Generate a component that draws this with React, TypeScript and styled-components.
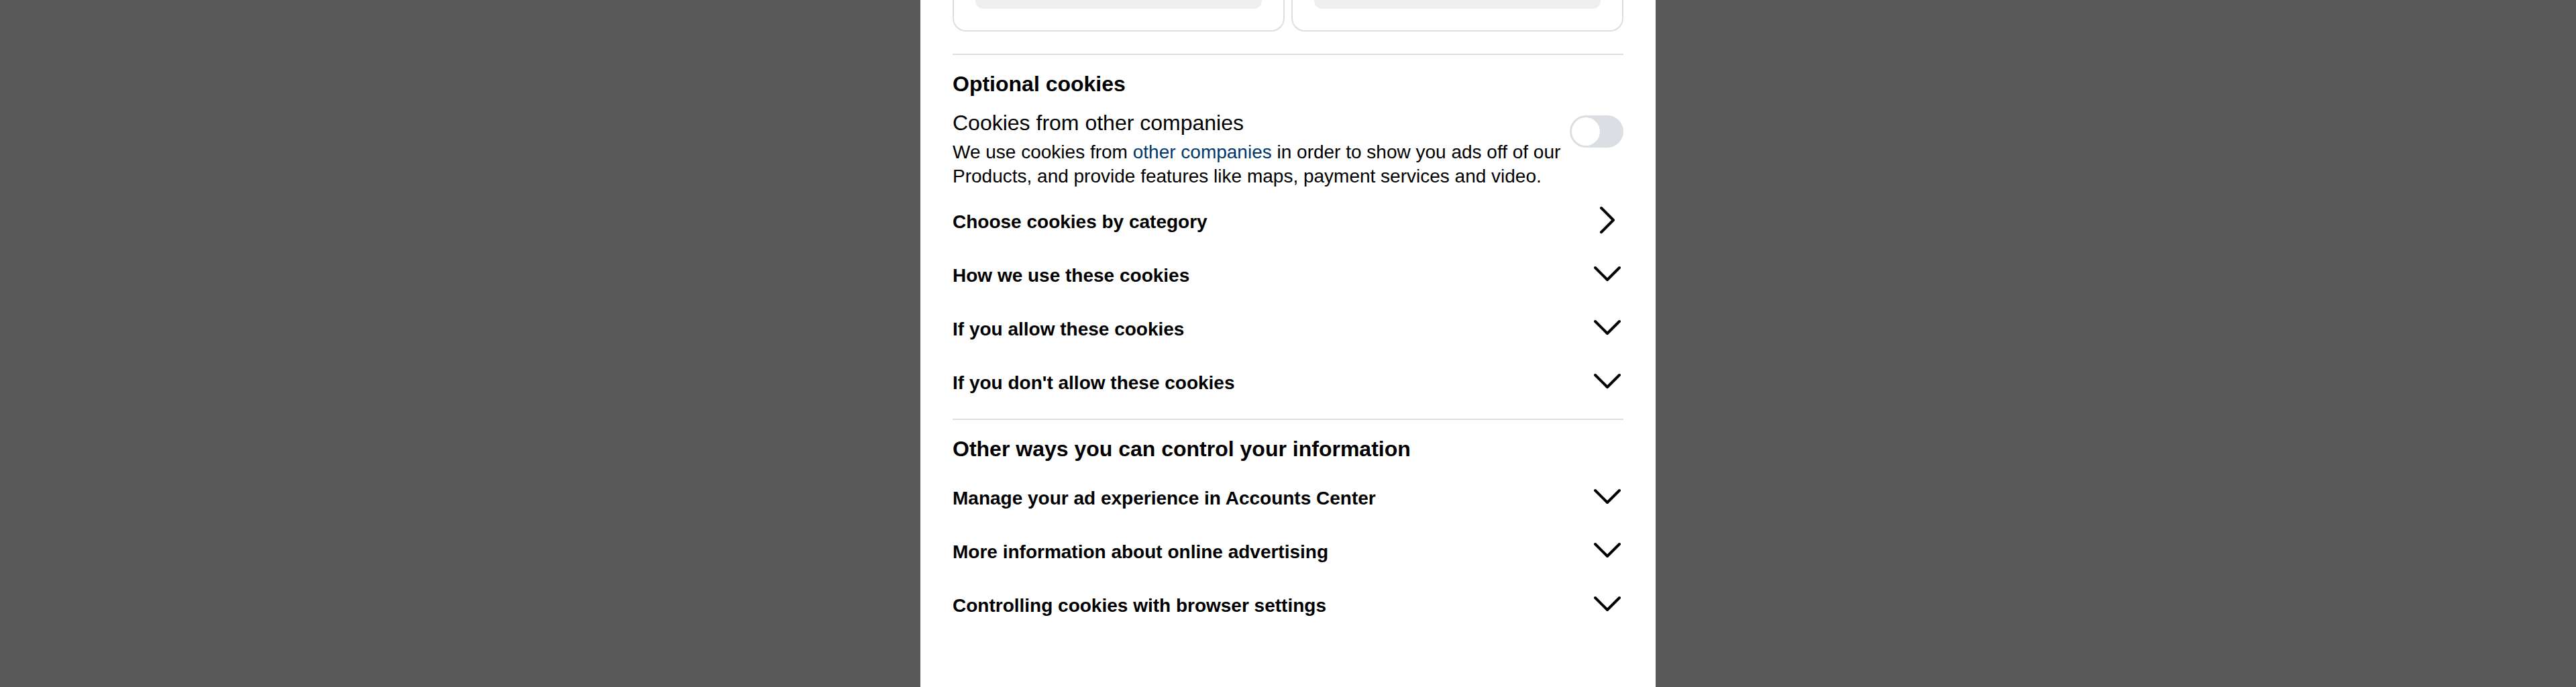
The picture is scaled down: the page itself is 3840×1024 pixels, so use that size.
import { useLayoutEffect, useRef } from "react";
import styled, { createGlobalStyle } from "styled-components";

const GlobalStyle = createGlobalStyle`
  html, body {
    margin: 0;
    padding: 0;
    background: #595959;
    overflow: hidden;
  }
  * {
    box-sizing: border-box;
  }
`;

const Backdrop = styled.div`
  height: 100vh;
  display: flex;
  justify-content: center;
  background: #595959;
  font-family: "Liberation Sans", Arial, sans-serif;
  color: #000;
`;

// The dialog is a scroll container; it is shown scrolled down to the optional cookies part.
const Dialog = styled.div`
  position: relative;
  width: 1096px;
  height: 100%;
  background: #fff;
  padding: 0 48px 160px;
  overflow-y: auto;
  scrollbar-width: none;
  &::-webkit-scrollbar {
    display: none;
  }
`;

const Intro = styled.div`
  padding-top: 48px;
  display: flex;
  flex-direction: column;
  gap: 24px;
`;

const DialogTitle = styled.h1`
  margin: 0;
  font-size: 40px;
  line-height: 48px;
  font-weight: 700;
`;

const Paragraph = styled.p`
  margin: 0;
  font-size: 28px;
  line-height: 36px;
`;

const CardGrid = styled.div`
  display: grid;
  grid-template-columns: 1fr 1fr;
  gap: 10px;
  margin-top: 32px;
  margin-bottom: 33px;
`;

const Card = styled.div`
  display: flex;
  flex-direction: column;
  gap: 16px;
  border: 2px solid #dedede;
  border-radius: 20px;
  padding: 32px;
`;

const CardTitle = styled.h3`
  margin: 0;
  font-size: 28px;
  line-height: 36px;
  font-weight: 700;
`;

const CardButton = styled.button`
  margin-top: auto;
  height: 56px;
  border: none;
  border-radius: 12px;
  background: #efefef;
  font-family: inherit;
  font-size: 28px;
  font-weight: 700;
  color: #000;
`;

const Divider = styled.hr`
  margin: 0;
  border: none;
  height: 2px;
  background: #dedede;
`;

const Section = styled.section`
  padding: 23px 0 13px;
`;

const SectionTitle = styled.h2`
  margin: 0;
  font-size: 32px;
  line-height: 40px;
  font-weight: 700;
`;

const ToggleBlock = styled.div`
  display: flex;
  align-items: flex-start;
  gap: 4px;
  margin-top: 18px;
`;

const ToggleText = styled.div`
  flex: 1;
`;

const ToggleLabel = styled.div`
  font-size: 32px;
  line-height: 40px;
`;

const Description = styled.p`
  margin: 6px 0 0;
  font-size: 28px;
  line-height: 36px;
`;

const Link = styled.a`
  color: #00376b;
  text-decoration: none;
`;

const Switch = styled.div<{ $on?: boolean }>`
  flex-shrink: 0;
  width: 80px;
  height: 48px;
  margin-top: 9px;
  border-radius: 24px;
  padding: 3px;
  background: ${(p) => (p.$on ? "#0095f6" : "#dbdfe4")};
  display: flex;
  justify-content: ${(p) => (p.$on ? "flex-end" : "flex-start")};
`;

const Knob = styled.span`
  width: 42px;
  height: 42px;
  border-radius: 50%;
  background: #fff;
`;

const List = styled.div<{ $gap: number }>`
  margin-top: ${(p) => p.$gap}px;
`;

const Row = styled.div`
  height: 80px;
  display: flex;
  align-items: center;
  justify-content: space-between;
  cursor: pointer;
`;

const RowLabel = styled.span`
  font-size: 28px;
  line-height: 36px;
  font-weight: 700;
`;

const Icon = styled.svg`
  width: 48px;
  height: 48px;
  margin-bottom: 6px;
  flex-shrink: 0;
`;

const Chevron = ({ dir }: { dir: "right" | "down" }) => (
  <Icon viewBox="0 0 48 48" fill="none" stroke="#000" strokeWidth={4} strokeLinecap="round" strokeLinejoin="round">
    {dir === "right" ? <polyline points="15,6 33,24 15,42" /> : <polyline points="6,15 24,33 42,15" />}
  </Icon>
);

const optionalRows = [
  { label: "Choose cookies by category", dir: "right" as const },
  { label: "How we use these cookies", dir: "down" as const },
  { label: "If you allow these cookies", dir: "down" as const },
  { label: "If you don't allow these cookies", dir: "down" as const },
];

const otherRows = [
  "Manage your ad experience in Accounts Center",
  "More information about online advertising",
  "Controlling cookies with browser settings",
];

export default function App() {
  const dialogRef = useRef<HTMLDivElement>(null);
  const dividerRef = useRef<HTMLHRElement>(null);

  // scroll the dialog so the first divider sits 80px from the top, like in the screenshot
  useLayoutEffect(() => {
    if (dialogRef.current && dividerRef.current) {
      dialogRef.current.scrollTop = dividerRef.current.offsetTop - 80;
    }
  }, []);

  return (
    <>
      <GlobalStyle />
      <Backdrop>
        <Dialog ref={dialogRef}>
          <Intro>
            <DialogTitle>Allow the use of cookies from Instagram on this browser?</DialogTitle>
            <Paragraph>
              We use cookies and similar technologies to help provide and improve content on Meta Products. We also use
              them to provide a safer experience by using information we receive from cookies on and off Instagram.
            </Paragraph>
          </Intro>

          <CardGrid>
            <Card>
              <CardTitle>Essential cookies</CardTitle>
              <Paragraph>These cookies are required to use Meta Products. They're necessary for these sites to work as intended.</Paragraph>
              <CardButton>Learn more</CardButton>
            </Card>
            <Card>
              <CardTitle>Cookies from other companies</CardTitle>
              <Paragraph>We use these cookies to show you ads off of Meta Products and to provide features.</Paragraph>
              <CardButton>Learn more</CardButton>
            </Card>
          </CardGrid>

          <Divider ref={dividerRef} />

          {/* Optional cookies */}
          <Section>
            <SectionTitle>Optional cookies</SectionTitle>
            <ToggleBlock>
              <ToggleText>
                <ToggleLabel>Cookies from other companies</ToggleLabel>
                <Description>
                  We use cookies from <Link href="#">other companies</Link> in order to show you ads off of our Products,
                  and provide features like maps, payment services and video.
                </Description>
              </ToggleText>
              <Switch>
                <Knob />
              </Switch>
            </ToggleBlock>
            <List $gap={10}>
              {optionalRows.map((row) => (
                <Row key={row.label}>
                  <RowLabel>{row.label}</RowLabel>
                  <Chevron dir={row.dir} />
                </Row>
              ))}
            </List>
          </Section>

          <Divider />

          {/* Other ways */}
          <Section>
            <SectionTitle>Other ways you can control your information</SectionTitle>
            <List $gap={14}>
              {otherRows.map((label) => (
                <Row key={label}>
                  <RowLabel>{label}</RowLabel>
                  <Chevron dir="down" />
                </Row>
              ))}
            </List>
          </Section>
        </Dialog>
      </Backdrop>
    </>
  );
}
